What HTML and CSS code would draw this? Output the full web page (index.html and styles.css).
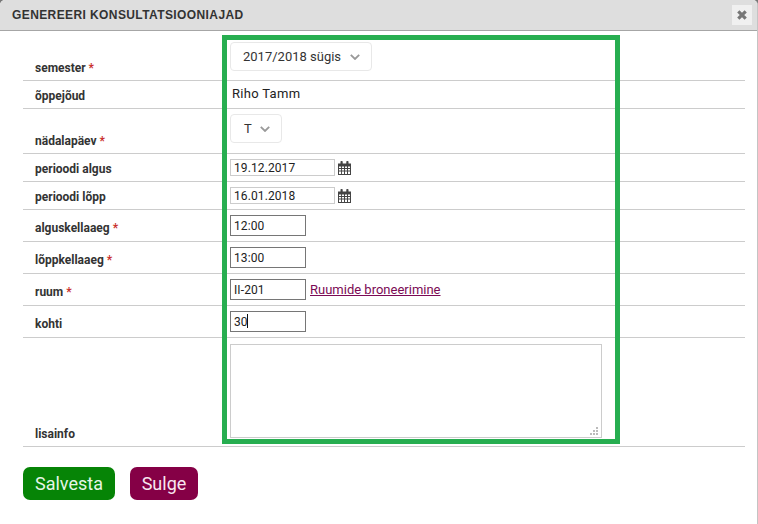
FILE: index.html
```html
<!DOCTYPE html>
<html lang="et">
<head>
<meta charset="utf-8">
<title>Genereeri konsultatsiooniajad</title>
<link rel="stylesheet" href="styles.css">
</head>
<body>
<div class="dialog">
  <header class="titlebar">
    <h1 class="title">GENEREERI KONSULTATSIOONIAJAD</h1>
    <button class="close" type="button" aria-label="Sulge">
      <svg class="close-icon" viewBox="0 0 12 12" width="12" height="12"><path d="M2.300 2.300 9.700 9.700M9.700 2.300 2.300 9.700"/></svg>
    </button>
  </header>
  <form class="form">
    <div class="rows">
      <div class="row">
        <div class="label">semester <span class="req">*</span></div>
        <div class="value pad-first">
          <div class="select select-wide"><span>2017/2018 sügis</span><svg class="chev" viewBox="0 0 10 6" width="10" height="6"><path d="M.8.8 5 5 9.200.8"/></svg></div>
        </div>
      </div>
      <div class="row">
        <div class="label">õppejõud</div>
        <div class="value pad-text">Riho Tamm</div>
      </div>
      <div class="row">
        <div class="label">nädalapäev <span class="req">*</span></div>
        <div class="value pad-third">
          <div class="select select-narrow"><span>T</span><svg class="chev" viewBox="0 0 10 6" width="10" height="6"><path d="M.8.8 5 5 9.200.8"/></svg></div>
        </div>
      </div>
      <div class="row">
        <div class="label">perioodi algus</div>
        <div class="value pad-std">
          <input class="date" type="text" value="19.12.2017">
          <svg class="cal" viewBox="0 0 13 14" width="13" height="14"><path class="cal-body" fill-rule="evenodd" d="M0 2.500h13V14H0zM1 5.500v1.600h2.100V5.500zm3 0v1.600h2V5.500zm3 0v1.600h2V5.500zm3 0v1.600h2V5.500zM1 8v1.600h2.100V8zm3 0v1.600h2V8zm3 0v1.600h2V8zm3 0v1.600h2V8zM1 10.500v2.500h2.100v-2.500zm3 0v2.500h2v-2.500zm3 0v2.500h2v-2.500zm3 0v2.500h2v-2.500z"/><rect class="cal-body" x="2.500" y="0" width="2.200" height="4" rx=".8"/><rect class="cal-body" x="8.300" y="0" width="2.200" height="4" rx=".8"/></svg>
        </div>
      </div>
      <div class="row">
        <div class="label">perioodi lõpp</div>
        <div class="value pad-std">
          <input class="date" type="text" value="16.01.2018">
          <svg class="cal" viewBox="0 0 13 14" width="13" height="14"><path class="cal-body" fill-rule="evenodd" d="M0 2.500h13V14H0zM1 5.500v1.600h2.100V5.500zm3 0v1.600h2V5.500zm3 0v1.600h2V5.500zm3 0v1.600h2V5.500zM1 8v1.600h2.100V8zm3 0v1.600h2V8zm3 0v1.600h2V8zm3 0v1.600h2V8zM1 10.500v2.500h2.100v-2.500zm3 0v2.500h2v-2.500zm3 0v2.500h2v-2.500zm3 0v2.500h2v-2.500z"/><rect class="cal-body" x="2.500" y="0" width="2.200" height="4" rx=".8"/><rect class="cal-body" x="8.300" y="0" width="2.200" height="4" rx=".8"/></svg>
        </div>
      </div>
      <div class="row">
        <div class="label label-input">alguskellaaeg <span class="req">*</span></div>
        <div class="value pad-std"><input class="time" type="text" value="12:00"></div>
      </div>
      <div class="row">
        <div class="label label-input">lõppkellaaeg <span class="req">*</span></div>
        <div class="value pad-std"><input class="time" type="text" value="13:00"></div>
      </div>
      <div class="row">
        <div class="label label-input">ruum <span class="req">*</span></div>
        <div class="value pad-std"><input class="time" type="text" value="II-201"><a class="link" href="#">Ruumide broneerimine</a></div>
      </div>
      <div class="row">
        <div class="label label-input">kohti</div>
        <div class="value pad-std">
          <div class="caret-wrap"><input class="time" type="text" value="30"><span class="caret"></span></div>
        </div>
      </div>
      <div class="row">
        <div class="label">lisainfo</div>
        <div class="value pad-area">
          <div class="area-wrap">
            <textarea class="area"></textarea>
            <svg class="grip" viewBox="0 0 8 8" width="8" height="8"><path d="M6 0h2v2H6zM3 3h2v2H3zM6 3h2v2H6zM0 6h2v2H0zM3 6h2v2H3zM6 6h2v2H6z"/></svg>
          </div>
        </div>
      </div>
    </div>
    <div class="actions">
      <button class="btn btn-save" type="button">Salvesta</button>
      <button class="btn btn-close" type="button">Sulge</button>
    </div>
  </form>
  <div class="highlight"></div>
</div>
</body>
</html>
```
FILE: styles.css
```css
* { box-sizing: border-box; }
html, body { margin: 0; height: 100%; background: #777; }
body { font-family: Roboto, "Liberation Sans", sans-serif; color: #222; overflow: hidden; }

.dialog {
  position: relative;
  width: 758px;
  height: 524px;
  background: #fff;
  border-right: 1px solid #c4c4c4;
  border-radius: 5px 5px 0 0;
  overflow: hidden;
}

.titlebar {
  display: flex;
  align-items: center;
  justify-content: space-between;
  height: 31px;
  padding: 0 5px 1px 12px;
  background: #dedede;
  border-bottom: 1px solid #a6a6a6;
}
.title {
  margin: 0;
  font: bold 12px "Liberation Sans", Arial, sans-serif;
  letter-spacing: .4px;
  color: #333;
}
.close {
  display: flex;
  align-items: center;
  justify-content: center;
  width: 20px;
  height: 20px;
  padding: 0;
  border: 0;
  background: #f0f0f0;
}
.close-icon path { fill: none; stroke: #777; stroke-width: 3.2; }

.form { padding: 0 12px 0 23px; }

.row {
  display: grid;
  grid-template-columns: 207px 1fr;
  border-bottom: 1px solid #ccc;
}
.label {
  align-self: end;
  padding: 0 0 5px 12px;
  font-size: 12px;
  font-weight: 700;
  line-height: 14px;
  color: #333;
}
.label-input { padding-bottom: 6px; }
.req { color: #c9302c; }

.value { display: flex; align-items: center; font-size: 13px; }
.pad-first { padding: 11px 0 9px; }
.pad-text { padding: 3px 2px 5px; height: 27px; letter-spacing: .3px; }
.pad-third { padding: 5px 0 10px; }
.pad-std { padding: 5px 0; }
.pad-area { padding: 6px 0 8px; }

.select {
  display: flex;
  align-items: center;
  justify-content: space-between;
  height: 29px;
  border: 1px solid #e8e8e8;
  border-radius: 4px;
  font-size: 13px;
  color: #333;
}
.select-wide { width: 142px; padding: 0 11px 0 12px; }
.select-narrow { width: 52px; padding: 0 11px 0 13px; }
.chev { fill: none; stroke: #999; stroke-width: 1.8; }

input {
  font-family: Roboto, "Liberation Sans", sans-serif;
  font-size: 12px;
  letter-spacing: .1px;
  color: #222;
  background: #fff;
  outline: none;
  margin: 0;
}
.date {
  width: 105px;
  height: 17px;
  padding: 0 3px;
  border: 1px solid #ccc;
}
.time {
  display: block;
  width: 76px;
  height: 21px;
  padding: 0 3px;
  border: 1px solid #767676;
}
.cal { margin-left: 3px; }
.cal-body { fill: #444; }

.link {
  margin-left: 4px;
  color: #7b0a55;
}
.caret-wrap { position: relative; }
.caret {
  position: absolute;
  left: 17px;
  top: 3px;
  width: 1px;
  height: 14px;
  background: #111;
}

.area-wrap { position: relative; }
.area {
  display: block;
  width: 372px;
  height: 94px;
  margin: 0;
  border: 1px solid #ccc;
  background: #fff;
  resize: none;
}
.grip { position: absolute; right: 4px; bottom: 3px; fill: #bbb; }

.actions { display: flex; gap: 15px; padding-top: 20px; }
.btn {
  height: 33px;
  padding: 0;
  border: 0;
  border-radius: 7px;
  font-family: Roboto, "Liberation Sans", sans-serif;
  font-size: 18px;
  color: #e6f5e6;
}
.btn-save { width: 92px; background: #068406; }
.btn-close { width: 68px; background: #850046; color: #f8e6f0; }

.highlight {
  position: absolute;
  left: 222px;
  top: 35px;
  width: 398px;
  height: 409px;
  border: 5px solid #27ae50;
  pointer-events: none;
}
```
